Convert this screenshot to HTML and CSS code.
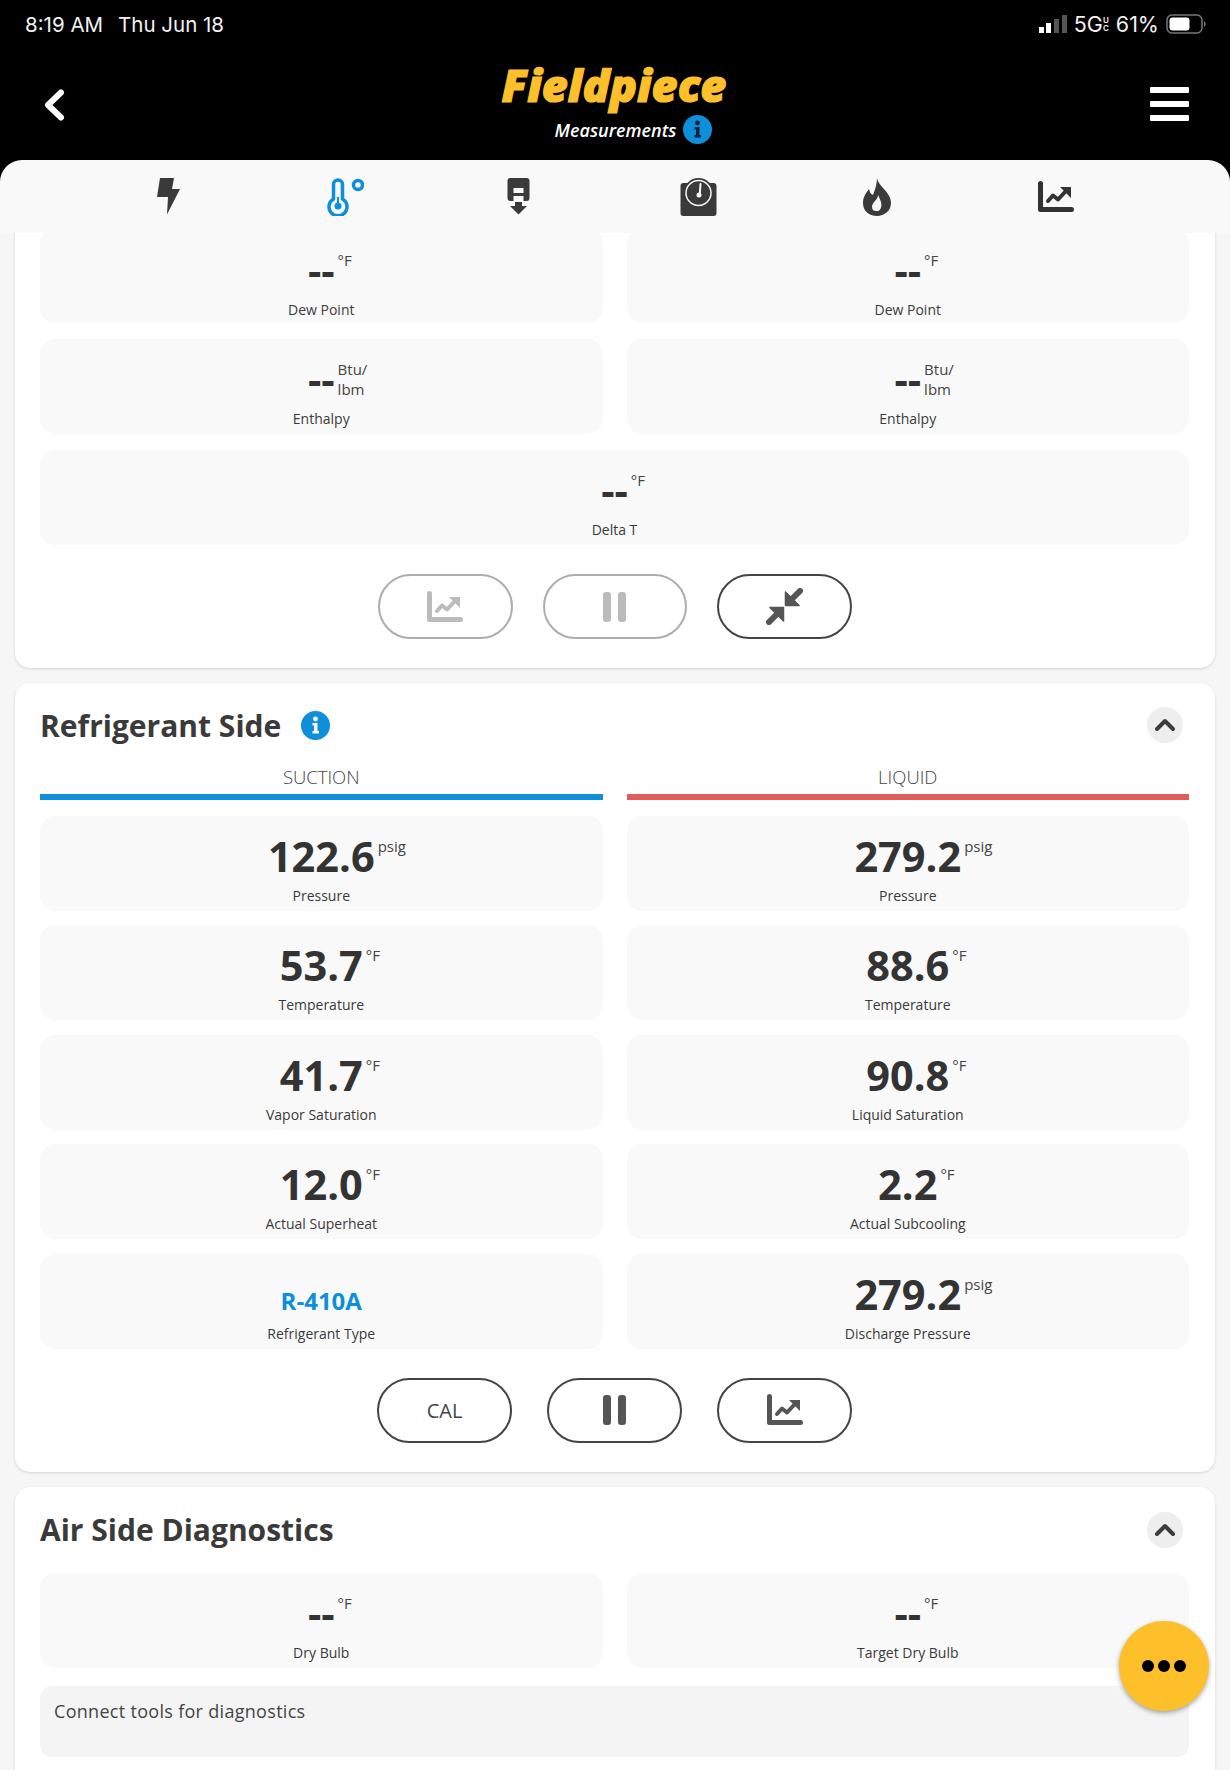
FILE: index.html
```html
<!DOCTYPE html>
<html lang="en">
<head>
  <meta charset="UTF-8">
  <title>Fieldpiece Measurements</title>
  <link rel="stylesheet" href="styles.css">
</head>
<body>
  <!-- icons used more than once -->
  <svg class="defs" width="0" height="0">
    <symbol id="i-graph" viewBox="0 0 36 32">
      <path d="M2.500 2.500V28.500H33.500" fill="none" stroke="currentColor" stroke-width="5" stroke-linecap="round" stroke-linejoin="round"/>
      <path d="M10 20L15 14.500L20 18.500L27 11" fill="none" stroke="currentColor" stroke-width="4" stroke-linecap="round" stroke-linejoin="round"/>
      <path d="M22 6H33V17Z" fill="currentColor"/>
    </symbol>
    <symbol id="i-info" viewBox="0 0 29 29">
      <circle cx="14.500" cy="14.500" r="14.500" fill="#0d8fdb"/>
      <circle cx="14.500" cy="8" r="2.400" fill="currentColor"/>
      <path d="M11.500 12H16.500V20H18V22.500H11.500V20H13V14.500H11.500Z" fill="currentColor"/>
    </symbol>
    <symbol id="i-pause" viewBox="0 0 24 32">
      <rect x="0" y="1" width="8" height="30" rx="3" fill="currentColor"/>
      <rect x="15" y="1" width="8" height="30" rx="3" fill="currentColor"/>
    </symbol>
    <symbol id="i-up" viewBox="0 0 36 36">
      <circle cx="18" cy="18" r="18" fill="#eeeeee"/>
      <path d="M10 22L18 14L26 22" fill="none" stroke="#3d3d3d" stroke-width="4" stroke-linecap="round" stroke-linejoin="round"/>
    </symbol>
  </svg>

  <!-- black top -->
  <header class="top">
    <div class="status">
      <div class="clock"><span>8:19 AM</span><span>Thu Jun 18</span></div>
      <div class="sys">
        <svg class="signal" width="28" height="18" viewBox="0 0 28 18">
          <rect x="0" y="12" width="5" height="6" fill="#fff"/>
          <rect x="7" y="8" width="5" height="10" fill="#fff"/>
          <rect x="15" y="4" width="5" height="14" fill="#555"/>
          <rect x="23" y="0" width="5" height="18" fill="#555"/>
        </svg>
        <span class="net">5G<span class="uc">U<br>C</span></span>
        <span>61%</span>
        <svg class="batt" width="41" height="20" viewBox="0 0 41 20">
          <rect x="1" y="1" width="35" height="18" rx="5" fill="none" stroke="#777" stroke-width="1.500"/>
          <rect x="3.500" y="3.500" width="20" height="13" rx="3" fill="#fff"/>
          <path d="M38 7C40 8 40 12 38 13Z" fill="#777"/>
        </svg>
      </div>
    </div>
    <div class="nav">
      <svg class="back" width="22" height="32" viewBox="0 0 22 32">
        <path d="M18 3.500L5 16L18 28.500" fill="none" stroke="#fff" stroke-width="6" stroke-linecap="round" stroke-linejoin="round"/>
      </svg>
      <div class="brand">
        <div class="logo">Fieldpiece</div>
        <div class="sub">Measurements <svg class="info info-dark" width="29" height="29"><use href="#i-info"/></svg></div>
      </div>
      <div class="ham"><i></i><i></i><i></i></div>
    </div>
  </header>

  <!-- tab icons -->
  <nav class="tabs">
    <a class="tab">
      <svg width="23" height="37" viewBox="0 0 23 37"><path d="M3 0H17L15 11H23L10 36.500L11 19H0Z" fill="#3a3a3a"/></svg>
    </a>
    <a class="tab">
      <svg width="37" height="38" viewBox="0 0 37 38">
        <path d="M6.500 21V6.500a4.500 4.500 0 0 1 9 0V21a9 9 0 1 1 -9 0Z" fill="none" stroke="#0d8fdb" stroke-width="3.500"/>
        <circle cx="11" cy="28" r="3.500" fill="#0d8fdb"/>
        <rect x="10" y="19" width="2" height="9" fill="#0d8fdb"/>
        <circle cx="31" cy="7" r="4.500" fill="none" stroke="#0d8fdb" stroke-width="3.500"/>
      </svg>
    </a>
    <a class="tab tab-sensor">
      <svg width="23" height="37" viewBox="0 0 23 37">
        <rect x="0.500" y="0" width="22" height="23" rx="3" fill="#3a3a3a"/>
        <rect x="6.500" y="10" width="10" height="5" fill="#f9f9f9"/>
        <rect x="6.500" y="18" width="10" height="5" fill="#f9f9f9"/>
        <rect x="8" y="24" width="7" height="5" fill="#3a3a3a"/>
        <path d="M3 28H20L11.500 36.500Z" fill="#3a3a3a"/>
      </svg>
    </a>
    <a class="tab">
      <svg width="37" height="38" viewBox="0 0 37 38">
        <rect x="0.500" y="5" width="36" height="33" rx="3" fill="#3a3a3a"/>
        <circle cx="18.500" cy="15" r="15" fill="#3a3a3a"/>
        <circle cx="18.500" cy="15" r="12.500" fill="none" stroke="#f9f9f9" stroke-width="1.500"/>
        <path d="M20.500 6L19.800 16" stroke="#f9f9f9" stroke-width="2" stroke-linecap="round"/>
        <circle cx="19" cy="17" r="2.500" fill="#f9f9f9"/>
      </svg>
    </a>
    <a class="tab">
      <svg width="28" height="38" viewBox="0 0 28 38">
        <path d="M14 0C15 8 28 14 28 25C28 33 21 38 14 38C6 38 0 33 0 25C0 19 3 15 6 11C7 15 8 16 10 17C12 12 14 6 14 0Z" fill="#3a3a3a"/>
        <path d="M15 17C15 22 9 24 9 29C9 32 11 33 13 33C8 33 16 33 15 33C18 32 19 28 18 24C17 21 16 19 15 17Z" fill="#f9f9f9"/>
      </svg>
    </a>
    <a class="tab">
      <svg width="36" height="32"><use href="#i-graph"/></svg>
    </a>
  </nav>

  <main class="scroll">
    <!-- scrolled card, its top is behind the tabs -->
    <section class="card card-first">
      <div class="pair">
        <div class="tile tile-top"><div class="num"><b class="none">--<span class="unit">°F</span></b></div><p>Dew Point</p></div>
        <div class="tile tile-top"><div class="num"><b class="none">--<span class="unit">°F</span></b></div><p>Dew Point</p></div>
        <div class="tile"><div class="num"><b class="none">--<span class="unit">Btu/<br>lbm</span></b></div><p>Enthalpy</p></div>
        <div class="tile"><div class="num"><b class="none">--<span class="unit">Btu/<br>lbm</span></b></div><p>Enthalpy</p></div>
        <div class="tile tile-wide"><div class="num"><b class="none">--<span class="unit">°F</span></b></div><p>Delta T</p></div>
      </div>
      <div class="btns btns-tight">
        <button class="btn off"><svg width="36" height="32"><use href="#i-graph"/></svg></button>
        <button class="btn btn-wide off"><svg width="24" height="32"><use href="#i-pause"/></svg></button>
        <button class="btn">
          <svg width="37" height="37" viewBox="0 0 38 38">
            <path d="M35 3L26 12" stroke="currentColor" stroke-width="6" stroke-linecap="round"/>
            <path d="M20 4V18H34Z" fill="currentColor" stroke="currentColor" stroke-width="1.500" stroke-linejoin="round"/>
            <path d="M3 35L12 26" stroke="currentColor" stroke-width="6" stroke-linecap="round"/>
            <path d="M4 20H18V34Z" fill="currentColor" stroke="currentColor" stroke-width="1.500" stroke-linejoin="round"/>
          </svg>
        </button>
      </div>
    </section>

    <section class="card">
      <div class="card-head">
        <h2>Refrigerant Side</h2>
        <svg class="info" width="29" height="29"><use href="#i-info"/></svg>
        <svg class="up" width="36" height="36"><use href="#i-up"/></svg>
      </div>
      <div class="cols">
        <div class="col">
          <h3 class="side side-blue">SUCTION</h3>
          <div class="tile"><div class="num"><b>122.6<span class="unit">psig</span></b></div><p>Pressure</p></div>
          <div class="tile"><div class="num"><b>53.7<span class="unit">°F</span></b></div><p>Temperature</p></div>
          <div class="tile"><div class="num"><b>41.7<span class="unit">°F</span></b></div><p>Vapor Saturation</p></div>
          <div class="tile"><div class="num"><b>12.0<span class="unit">°F</span></b></div><p>Actual Superheat</p></div>
          <div class="tile"><div class="num"><b class="type">R-410A</b></div><p>Refrigerant Type</p></div>
        </div>
        <div class="col">
          <h3 class="side side-red">LIQUID</h3>
          <div class="tile"><div class="num"><b>279.2<span class="unit">psig</span></b></div><p>Pressure</p></div>
          <div class="tile"><div class="num"><b>88.6<span class="unit">°F</span></b></div><p>Temperature</p></div>
          <div class="tile"><div class="num"><b>90.8<span class="unit">°F</span></b></div><p>Liquid Saturation</p></div>
          <div class="tile"><div class="num"><b>2.2<span class="unit">°F</span></b></div><p>Actual Subcooling</p></div>
          <div class="tile"><div class="num"><b>279.2<span class="unit">psig</span></b></div><p>Discharge Pressure</p></div>
        </div>
      </div>
      <div class="btns">
        <button class="btn btn-text">CAL</button>
        <button class="btn"><svg width="24" height="32"><use href="#i-pause"/></svg></button>
        <button class="btn"><svg width="36" height="32"><use href="#i-graph"/></svg></button>
      </div>
    </section>

    <section class="card card-last">
      <div class="card-head">
        <h2>Air Side Diagnostics</h2>
        <svg class="up" width="36" height="36"><use href="#i-up"/></svg>
      </div>
      <div class="pair pair-air">
        <div class="tile"><div class="num"><b class="none">--<span class="unit">°F</span></b></div><p>Dry Bulb</p></div>
        <div class="tile"><div class="num"><b class="none">--<span class="unit">°F</span></b></div><p>Target Dry Bulb</p></div>
      </div>
      <div class="notice">Connect tools for diagnostics</div>
    </section>
  </main>

  <!-- floating button -->
  <button class="fab"><i></i><i></i><i></i></button>
</body>
</html>
```

FILE: styles.css
```css
html, body{
  margin: 0;
  padding: 0;
}

body{
  position: relative;
  height: 1770px;
  overflow: hidden;
  background-color: #f6f6f6;
  font-family: "Open Sans", "Liberation Sans", sans-serif;
  color: #333;
}

.defs{
  position: absolute;
}

/* black top, runs on behind the round corners of the tabs */
.top{
  height: 182px;
  background-color: #000;
  color: #fff;
}

.status{
  display: flex;
  justify-content: space-between;
  align-items: center;
  height: 48px;
  padding: 0 23px 0 25px;
  font-family: Inter, "Liberation Sans", sans-serif;
  font-size: 21.500px;
  color: #f2f2f2;
}
.clock{
  display: flex;
  gap: 15px;
  font-size: 20.500px;
}
.sys{
  display: flex;
  align-items: center;
  gap: 7px;
}
.net{
  display: flex;
  align-items: center;
}
.uc{
  font-size: 8px;
  line-height: 8px;
  font-weight: 600;
  text-align: center;
}

.nav{
  display: grid;
  grid-template-columns: 1fr auto 1fr;
  align-items: center;
  padding: 12px 41px 0 43px;
}
.back{
  justify-self: start;
  margin-top: 5px;
}
.brand{
  text-align: center;
}
.logo{
  height: 50px;
  padding-right: 4px;
  font-size: 45px;
  line-height: 50px;
  font-weight: 800;
  font-style: italic;
  color: #fdc02b;
  -webkit-text-stroke: 1.200px #fdc02b;
}
.sub{
  display: flex;
  justify-content: center;
  align-items: center;
  gap: 7px;
  font-size: 18px;
  font-style: italic;
  font-weight: 600;
  height: 29px;
  margin-top: 5px;
  padding-left: 35px;
}
.info-dark{
  color: #16233a;
}
.ham{
  justify-self: end;
  width: 39px;
  margin-top: 4px;
}
.ham i{
  display: block;
  height: 6px;
  margin-bottom: 8px;
  border-radius: 1px;
  background-color: #fff;
}
.ham i:last-child{
  margin-bottom: 0;
}

/* tabs */
.tabs{
  position: relative;
  z-index: 2;
  display: flex;
  align-items: center;
  gap: 146.500px;
  height: 73px;
  margin-top: -22px;
  padding-left: 157px;
  box-sizing: border-box;
  border-radius: 22px 22px 0 0;
  background-color: #f9f9f9;
}
.tab{
  display: flex;
}
.tab-sensor{
  margin: 0 3.500px 0 -3.500px;
}

/* cards */
.scroll{
  display: flex;
  flex-direction: column;
  gap: 15px;
  height: 1537px;
  padding: 0 15px;
  overflow: hidden;
}
.card{
  flex: none;
  padding: 20px 26px 29px 25px;
  border-radius: 15px;
  background-color: #fff;
  box-shadow: 0 1px 3px rgba(0, 0, 0, .14);
}
.card-first{
  margin-top: -5px;
  padding-top: 0;
  border-radius: 0 0 15px 15px;
}
.card-last{
  padding-top: 21px;
}

.card-head{
  display: flex;
  align-items: center;
  height: 44px;
}
h2{
  margin: 0;
  font-size: 30px;
  font-weight: 700;
  color: #3a3a3a;
}
.card-head .info{
  margin-left: 20px;
  color: #fff;
}
.card-head .up{
  margin-left: auto;
  margin-right: 6px;
}

/* two sides */
.cols{
  display: grid;
  grid-template-columns: 1fr 1fr;
  column-gap: 24px;
  margin-top: 13px;
}
.col{
  display: flex;
  flex-direction: column;
  gap: 14.500px;
}
.side{
  height: 34px;
  margin: 0 0 1px;
  font-size: 18.500px;
  line-height: 34px;
  font-weight: 300;
  text-align: center;
  color: #444;
  border-bottom: 6px solid;
  box-sizing: content-box;
}
.side-blue{
  border-color: #0d8fdb;
}
.side-red{
  border-color: #e45b5b;
}

.pair{
  display: grid;
  grid-template-columns: 1fr 1fr;
  gap: 16px 24px;
}
.pair-air{
  margin-top: 21.500px;
}
.tile-wide{
  grid-column: 1 / 3;
}

.tile{
  height: 95px;
  box-sizing: border-box;
  padding-top: 11px;
  border-radius: 15px;
  background-color: #f9f9f9;
  text-align: center;
}
.tile-top{
  padding-top: 13px;
}
.num{
  height: 58px;
  line-height: 58px;
}
.num b{
  position: relative;
  display: inline-block;
  font-size: 41.500px;
  font-weight: 700;
  color: #333;
}
.num .none{
  vertical-align: -1px;
}
.num .type{
  font-size: 24px;
  line-height: 72px;
  font-weight: 700;
  color: #0d8fdb;
}
/* unit sits beside the number, the number stays centred */
.unit{
  position: absolute;
  top: 9px;
  left: 100%;
  margin-left: 3px;
  font-size: 15px;
  line-height: 20px;
  font-weight: 400;
  text-align: left;
  color: #444;
}
.tile p{
  margin: 1px 0 0;
  font-size: 14px;
  line-height: 20px;
  color: #3a3a3a;
}

/* pill buttons */
.btns{
  display: flex;
  justify-content: center;
  gap: 35px;
  margin-top: 29px;
}
.btns-tight{
  gap: 30px;
}
.btn{
  display: flex;
  justify-content: center;
  align-items: center;
  width: 135px;
  height: 65px;
  padding: 0;
  border: 2px solid #444;
  border-radius: 33px;
  background-color: #fff;
  color: #555;
}
.btn-wide{
  width: 144px;
}
.btn-text{
  font-family: "Open Sans", "Liberation Sans", sans-serif;
  font-size: 20px;
  color: #444;
}
.btn.off{
  border-color: #adadad;
  color: #bbb;
}

.notice{
  height: 71px;
  margin-top: 18px;
  padding: 13px 14px;
  box-sizing: border-box;
  border-radius: 12px;
  background-color: #f4f4f4;
  font-size: 18px;
  line-height: 24px;
  letter-spacing: .3px;
  color: #444;
}

.fab{
  position: absolute;
  left: 1119px;
  top: 1621px;
  z-index: 3;
  display: flex;
  justify-content: center;
  align-items: center;
  gap: 4px;
  width: 90px;
  height: 90px;
  padding: 0;
  border: none;
  border-radius: 50%;
  background-color: #fdc02b;
  box-shadow: 0 2px 5px rgba(0, 0, 0, .35);
}
.fab i{
  width: 12px;
  height: 12px;
  border-radius: 50%;
  background-color: #000;
}
```
